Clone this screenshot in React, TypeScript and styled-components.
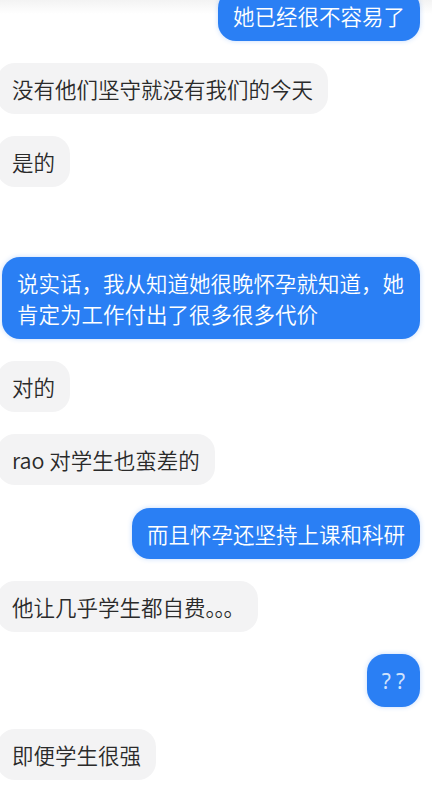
import React from "react";
import styled, { createGlobalStyle } from "styled-components";

const GlobalStyle = createGlobalStyle`
  html, body {
    margin: 0;
    padding: 0;
    background: linear-gradient(#f3f3f3 0px, #ffffff 14px) no-repeat, #ffffff;
    overflow: hidden;
  }
  body {
    font-family: "Noto Sans CJK SC", "Noto Sans", sans-serif;
  }
`;

const Thread = styled.div`
  width: 432px;
  height: 796px;
  overflow: hidden;
  display: flex;
  flex-direction: column;
  box-sizing: border-box;
`;

const Inner = styled.div`
  display: flex;
  flex-direction: column;
  gap: 22.2px;
  margin-top: -10px;
`;

const Row = styled.div<{ $mine?: boolean; $extraTop?: number }>`
  display: flex;
  justify-content: ${(p) => (p.$mine ? "flex-end" : "flex-start")};
  padding-right: ${(p) => (p.$mine ? "12px" : "0")};
  margin-left: ${(p) => (p.$mine ? "0" : "-3px")};
  margin-top: ${(p) => p.$extraTop ?? 0}px;
`;

const Bubble = styled.div<{ $mine?: boolean }>`
  max-width: 418px;
  box-sizing: border-box;
  padding: 10px 15px;
  border-radius: 18px;
  font-size: 21.5px;
  font-weight: 350;
  line-height: 31px;
  background: ${(p) => (p.$mine ? "#2a7ff4" : "#f3f3f4")};
  color: ${(p) => (p.$mine ? "#ffffff" : "#2a2a2a")};
  box-shadow: ${(p) => (p.$mine ? "0 0 5px rgba(42, 127, 244, 0.28)" : "none")};
  word-break: break-all;
`;

const Marks = styled.span`
  display: inline-block;
  font-family: "Noto Sans", "Liberation Sans", sans-serif;
  font-size: 21px;
  font-weight: 400;
  letter-spacing: 5px;
  margin-right: -5px;
  color: rgba(255, 255, 255, 0.8);
`;

const Dots = styled.span`
  letter-spacing: -1.7px;
`;

type Msg = { text: string; mine?: boolean; extraTop?: number; marks?: boolean; dots?: string };

const messages: Msg[] = [
  { text: "她已经很不容易了", mine: true },
  { text: "没有他们坚守就没有我们的今天" },
  { text: "是的" },
  { text: "说实话，我从知道她很晚怀孕就知道，她肯定为工作付出了很多很多代价", mine: true, extraTop: 47.5 },
  { text: "对的" },
  { text: "rao 对学生也蛮差的" },
  { text: "而且怀孕还坚持上课和科研", mine: true },
  { text: "他让几乎学生都自费", dots: "。。。" },
  { text: "??", mine: true, marks: true },
  { text: "即便学生很强" },
];

export default function App() {
  return (
    <>
      <GlobalStyle />
      <Thread>
        <Inner>
          {messages.map((m, i) => (
            <Row key={i} $mine={m.mine} $extraTop={m.extraTop}>
              <Bubble $mine={m.mine}>
                {m.marks ? <Marks>{m.text}</Marks> : m.text}
                {m.dots && <Dots>{m.dots}</Dots>}
              </Bubble>
            </Row>
          ))}
        </Inner>
      </Thread>
    </>
  );
}
